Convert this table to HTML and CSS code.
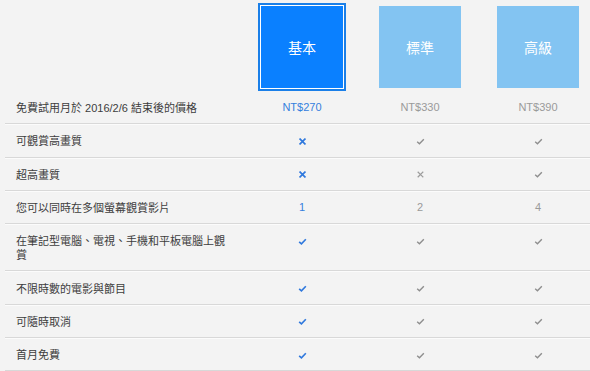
FILE: index.html
```html
<!DOCTYPE html>
<html lang="zh-Hant">
<head>
<meta charset="utf-8">
<title>方案比較</title>
<link rel="stylesheet" href="styles.css">
</head>
<body>
<table class="plans">
  <colgroup>
    <col class="col-label"><col class="col-plan"><col class="col-plan"><col class="col-plan">
  </colgroup>
  <thead>
    <tr class="head-row">
      <th></th>
      <th><div class="plan-box selected">基本</div></th>
      <th><div class="plan-box">標準</div></th>
      <th><div class="plan-box">高級</div></th>
    </tr>
  </thead>
  <tbody>
    <tr>
      <td class="label">免費試用月於 2016/2/6 結束後的價格</td>
      <td class="on">NT$270</td>
      <td class="off">NT$330</td>
      <td class="off">NT$390</td>
    </tr>
    <tr>
      <td class="label">可觀賞高畫質</td>
      <td class="on"><svg class="ic-x" viewBox="0 0 8 8"><path d="M1.3 1.3L6.7 6.7M6.7 1.3L1.3 6.7"/></svg></td>
      <td class="off"><svg class="ic-ok" viewBox="0 0 10 8"><path d="M1.2 4.3L3.8 6.6L8.8 1.4"/></svg></td>
      <td class="off"><svg class="ic-ok" viewBox="0 0 10 8"><path d="M1.2 4.3L3.8 6.6L8.8 1.4"/></svg></td>
    </tr>
    <tr>
      <td class="label">超高畫質</td>
      <td class="on"><svg class="ic-x" viewBox="0 0 8 8"><path d="M1.3 1.3L6.7 6.7M6.7 1.3L1.3 6.7"/></svg></td>
      <td class="off"><svg class="ic-x" viewBox="0 0 8 8"><path d="M1.3 1.3L6.7 6.7M6.7 1.3L1.3 6.7"/></svg></td>
      <td class="off"><svg class="ic-ok" viewBox="0 0 10 8"><path d="M1.2 4.3L3.8 6.6L8.8 1.4"/></svg></td>
    </tr>
    <tr>
      <td class="label">您可以同時在多個螢幕觀賞影片</td>
      <td class="on">1</td>
      <td class="off">2</td>
      <td class="off">4</td>
    </tr>
    <tr>
      <td class="label">在筆記型電腦、電視、手機和平板電腦上觀賞</td>
      <td class="on"><svg class="ic-ok" viewBox="0 0 10 8"><path d="M1.2 4.3L3.8 6.6L8.8 1.4"/></svg></td>
      <td class="off"><svg class="ic-ok" viewBox="0 0 10 8"><path d="M1.2 4.3L3.8 6.6L8.8 1.4"/></svg></td>
      <td class="off"><svg class="ic-ok" viewBox="0 0 10 8"><path d="M1.2 4.3L3.8 6.6L8.8 1.4"/></svg></td>
    </tr>
    <tr>
      <td class="label">不限時數的電影與節目</td>
      <td class="on"><svg class="ic-ok" viewBox="0 0 10 8"><path d="M1.2 4.3L3.8 6.6L8.8 1.4"/></svg></td>
      <td class="off"><svg class="ic-ok" viewBox="0 0 10 8"><path d="M1.2 4.3L3.8 6.6L8.8 1.4"/></svg></td>
      <td class="off"><svg class="ic-ok" viewBox="0 0 10 8"><path d="M1.2 4.3L3.8 6.6L8.8 1.4"/></svg></td>
    </tr>
    <tr>
      <td class="label">可隨時取消</td>
      <td class="on"><svg class="ic-ok" viewBox="0 0 10 8"><path d="M1.2 4.3L3.8 6.6L8.8 1.4"/></svg></td>
      <td class="off"><svg class="ic-ok" viewBox="0 0 10 8"><path d="M1.2 4.3L3.8 6.6L8.8 1.4"/></svg></td>
      <td class="off"><svg class="ic-ok" viewBox="0 0 10 8"><path d="M1.2 4.3L3.8 6.6L8.8 1.4"/></svg></td>
    </tr>
    <tr>
      <td class="label">首月免費</td>
      <td class="on"><svg class="ic-ok" viewBox="0 0 10 8"><path d="M1.2 4.3L3.8 6.6L8.8 1.4"/></svg></td>
      <td class="off"><svg class="ic-ok" viewBox="0 0 10 8"><path d="M1.2 4.3L3.8 6.6L8.8 1.4"/></svg></td>
      <td class="off"><svg class="ic-ok" viewBox="0 0 10 8"><path d="M1.2 4.3L3.8 6.6L8.8 1.4"/></svg></td>
    </tr>
  </tbody>
</table>
</body>
</html>
```

FILE: styles.css
```css
html, body {
  margin: 0;
  padding: 0;
  background: #f3f3f3;
  overflow: hidden;
}
body {
  font-family: "Liberation Sans", "Noto Sans CJK TC", sans-serif;
  font-size: 11px;
  color: #3d3d3d;
}
.plans {
  margin-left: 5px;
  width: 592px;
  border-collapse: collapse;
  table-layout: fixed;
}
.col-label { width: 238px; }
.col-plan { width: 118px; }

.head-row th {
  height: 91px;
  padding: 0;
  vertical-align: bottom;
}
.plan-box {
  width: 82px;
  height: 82px;
  margin: 0 auto 3px;
  background: #83c4f2;
  color: #fff;
  font-family: "Noto Sans CJK TC", sans-serif;
  font-weight: normal;
  font-size: 14px;
  display: flex;
  align-items: center;
  justify-content: center;
}
.plan-box.selected {
  background: #0a80ff;
  box-shadow: 0 0 0 1px #fff, 0 0 0 3px #1a7fe8;
}

tbody td {
  padding: 9.15px 0;
  line-height: 14px;
  border-bottom: 1px solid #d8d8d8;
  box-shadow: inset 0 1px 0 #fbfbfb;
  text-align: center;
  vertical-align: top;
}
tbody tr:first-child td { box-shadow: none; }
tbody td.label {
  text-align: left;
  padding: 10.15px 12px 8.15px 11px;
}
tbody td.on { color: #3580de; }
tbody td.off { color: #9a9a9a; }

svg {
  display: inline-block;
  vertical-align: middle;
  fill: none;
  stroke: currentColor;
  stroke-linecap: square;
}
.ic-x { width: 7px; height: 7px; stroke-width: 1.9; }
.on .ic-x { stroke: #2f78dd; }
.off .ic-x { stroke: #9c9c9c; stroke-width: 1.4; }
.ic-ok { width: 9px; height: 7px; stroke-width: 1.6; stroke-linecap: butt; }
.on .ic-ok { stroke: #2f78dd; stroke-width: 1.9; }
.off .ic-ok { stroke: #8e8e8e; }
```
